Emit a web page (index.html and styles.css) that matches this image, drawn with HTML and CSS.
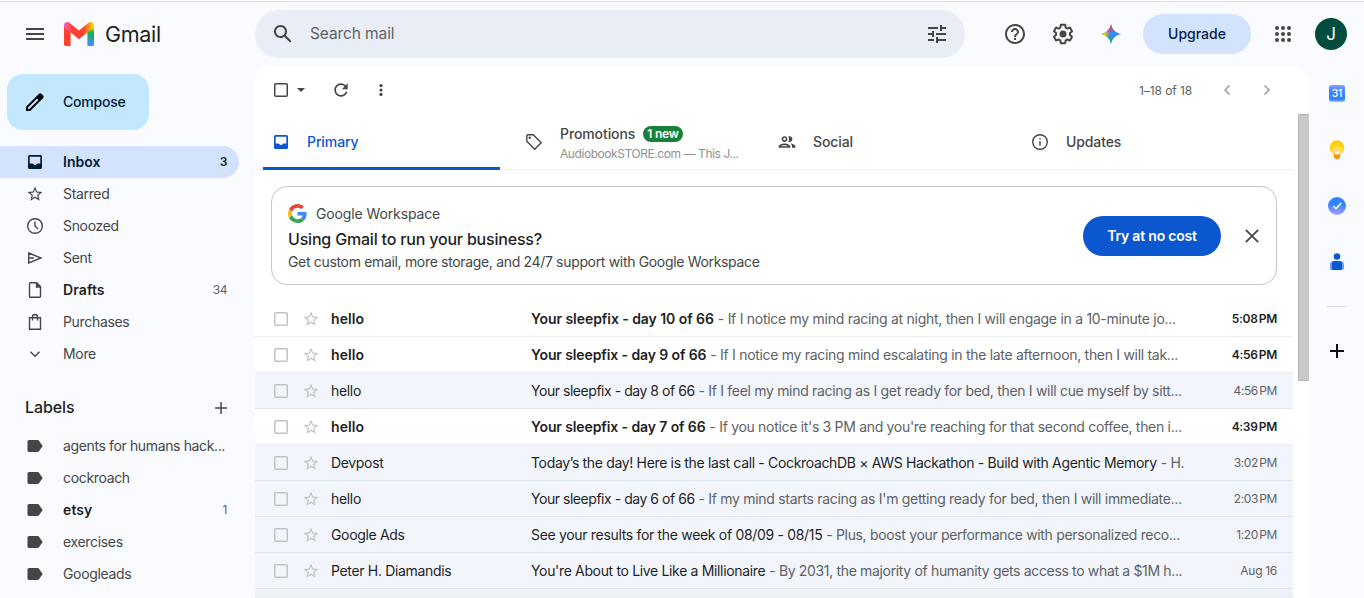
FILE: index.html
```html
<!DOCTYPE html>
<html lang="en">
<head>
<meta charset="utf-8">
<title>Gmail</title>
<link rel="stylesheet" href="styles.css">
</head>
<body>
<svg class="defs" width="0" height="0" aria-hidden="true">
  <defs>
    <linearGradient id="m-leg" x1="0" y1="0" x2="0" y2="1"><stop offset="0.1" stop-color="#f9d000"/><stop offset="0.3" stop-color="#1fae4b"/><stop offset="0.55" stop-color="#1aa87a"/><stop offset="0.8" stop-color="#3d8bff"/></linearGradient>
    <linearGradient id="m-v" gradientUnits="userSpaceOnUse" x1="0" y1="0" x2="30" y2="0"><stop offset="0.04" stop-color="#f763b8"/><stop offset="0.26" stop-color="#ff4131"/><stop offset="0.64" stop-color="#ff4131"/><stop offset="0.82" stop-color="#ff8c1c"/><stop offset="0.96" stop-color="#ffd500"/></linearGradient>
    <linearGradient id="cal" x1="0" y1="0" x2="0" y2="1"><stop offset="0" stop-color="#8b9dff"/><stop offset="0.4" stop-color="#3c82ff"/><stop offset="0.85" stop-color="#3286ff"/><stop offset="1" stop-color="#9cc8ff"/></linearGradient>
    <linearGradient id="task" x1="0" y1="0" x2="0" y2="1"><stop offset="0.4" stop-color="#2f83ff"/><stop offset="1" stop-color="#a9a0ff"/></linearGradient>
    <radialGradient id="bulb" cx="0.5" cy="0.85" r="0.8"><stop offset="0" stop-color="#ffc2c8"/><stop offset="0.3" stop-color="#ffdc5a"/><stop offset="0.6" stop-color="#ffd61a"/><stop offset="1" stop-color="#ffc800"/></radialGradient>
    <radialGradient id="g-red" gradientUnits="userSpaceOnUse" cx="8.500" cy="1" r="8"><stop offset="0.4" stop-color="#f2404f"/><stop offset="1" stop-color="#f2404f" stop-opacity="0"/></radialGradient>
    <radialGradient id="g-yel" gradientUnits="userSpaceOnUse" cx="1" cy="10" r="8"><stop offset="0.4" stop-color="#f5c400"/><stop offset="1" stop-color="#f5c400" stop-opacity="0"/></radialGradient>
    <radialGradient id="g-grn" gradientUnits="userSpaceOnUse" cx="9" cy="20" r="8.500"><stop offset="0.4" stop-color="#0fb657"/><stop offset="1" stop-color="#0fb657" stop-opacity="0"/></radialGradient>
    <symbol id="star" viewBox="0 0 24 24"><path d="M22 9.24l-7.19-.62L12 2 9.19 8.63 2 9.24l5.46 4.73L5.82 21 12 17.27 18.18 21l-1.63-7.03L22 9.24zM12 15.4l-3.76 2.27 1-4.28-3.32-2.88 4.38-.38L12 6.1l1.71 4.04 4.38.38-3.32 2.88 1 4.28L12 15.4z"/></symbol>
    <symbol id="inbox" viewBox="0 0 20 20"><path fill-rule="evenodd" d="M4.5 3h11A1.5 1.5 0 0 1 17 4.500v11a1.500 1.500 0 0 1-1.500 1.500h-11A1.500 1.500 0 0 1 3 15.500v-11A1.500 1.500 0 0 1 4.500 3zM4.700 4.700v6.800h2.800c.4 0 .6.200.8.500.4.700 1 1 1.700 1s1.300-.3 1.700-1c.2-.3.400-.5.800-.5h2.800V4.700z"/></symbol>
    <symbol id="label" viewBox="0 0 20 20"><path d="M4 4h8.600c.6 0 1.100.3 1.400.7L17.700 10 14 15.300c-.3.400-.8.700-1.400.7H4a1.500 1.500 0 0 1-1.500-1.500v-9A1.500 1.500 0 0 1 4 4z"/></symbol>
    <symbol id="box" viewBox="0 0 14 14"><rect x="0.750" y="0.750" width="12.500" height="12.500" rx="1" fill="none" stroke="currentColor" stroke-width="1.500"/></symbol>
    <path id="spark" d="M10 0c.9 5.200 4.800 9.100 10 10-5.200.9-9.100 4.800-10 10-.9-5.200-4.800-9.100-10-10C5.200 9.100 9.100 5.200 10 0z"/>
  </defs>
</svg>

<div class="app">
  <header class="topbar">
    <div class="brand">
      <svg class="menu" viewBox="0 0 18 12"><path d="M0 1h18M0 6h18M0 11h18" stroke="currentColor" stroke-width="2"/></svg>
      <svg class="logo" viewBox="0 0 30 24"><path d="M0 4h6.600v20H1.800A1.800 1.800 0 0 1 0 22z" fill="#ff4131"/><path d="M23.400 4H30v18a1.800 1.800 0 0 1-1.800 2h-4.800z" fill="url(#m-leg)"/><path d="M3.300 3.400L15 12.900 26.700 3.400" fill="none" stroke="url(#m-v)" stroke-width="6.600" stroke-linecap="round"/></svg>
      <span class="brand-name">Gmail</span>
    </div>
    <div class="search">
      <svg class="i24" viewBox="0 0 24 24"><path d="M20.490 19l-5.730-5.730C15.530 12.200 16 10.910 16 9.500 16 5.910 13.090 3 9.500 3S3 5.910 3 9.500 5.910 16 9.500 16c1.410 0 2.700-.47 3.770-1.240L19 20.490 20.490 19zM5 9.500C5 7.010 7.010 5 9.500 5S14 7.010 14 9.500 11.990 14 9.500 14 5 11.990 5 9.500z"/></svg>
      <span class="search-text">Search mail</span>
      <svg class="i24" viewBox="0 0 24 24"><path d="M3 17v2h6v-2H3zM3 5v2h10V5H3zm10 16v-2h8v-2h-8v-2h-2v6h2zM7 9v2H3v2h4v2h2V9H7zm14 4v-2H11v2h10zm-6-4h2V7h4V5h-4V3h-2v6z"/></svg>
    </div>
    <div class="tools">
      <svg class="i24" viewBox="0 0 24 24"><path d="M11 18h2v-2h-2v2zm1-16C6.480 2 2 6.480 2 12s4.480 10 10 10 10-4.480 10-10S17.520 2 12 2zm0 18c-4.410 0-8-3.590-8-8s3.590-8 8-8 8 3.590 8 8-3.590 8-8 8zm0-14c-2.210 0-4 1.790-4 4h2c0-1.100.9-2 2-2s2 .9 2 2c0 2-3 1.750-3 5h2c0-2.250 3-2.500 3-5 0-2.210-1.790-4-4-4z"/></svg>
      <svg class="i24" viewBox="0 0 24 24"><path d="M13.850 22.250h-3.700c-.74 0-1.360-.54-1.450-1.270l-.27-1.890c-.27-.14-.53-.29-.79-.46l-1.800.72c-.7.260-1.470-.03-1.810-.65L2.200 15.530c-.35-.66-.2-1.440.36-1.880l1.530-1.190c-.01-.15-.02-.3-.02-.46 0-.15.010-.31.020-.46l-1.520-1.190c-.59-.45-.74-1.260-.37-1.880l1.850-3.190c.34-.62 1.110-.9 1.790-.63l1.810.73c.26-.17.520-.32.780-.46l.27-1.910c.09-.7.710-1.250 1.440-1.250h3.700c.74 0 1.360.540 1.450 1.270l.27 1.890c.27.140.53.290.79.460l1.800-.72c.71-.26 1.480.030 1.820.650l1.840 3.180c.36.660.2 1.440-.36 1.880l-1.520 1.190c.01.150.02.300.02.460s-.01.310-.02.460l1.520 1.190c.56.450.72 1.230.37 1.860l-1.860 3.220c-.34.620-1.110.900-1.800.630l-1.800-.72c-.26.170-.52.320-.78.460l-.27 1.910c-.1.680-.72 1.220-1.460 1.220zm-3.230-2h2.760l.37-2.550.53-.22c.44-.18.880-.44 1.340-.78l.45-.34 2.380.96 1.380-2.400-2.030-1.580.07-.56c.03-.26.060-.51.060-.78s-.03-.53-.06-.78l-.07-.56 2.030-1.580-1.390-2.400-2.390.96-.45-.35c-.42-.32-.87-.58-1.330-.77l-.52-.22-.37-2.550h-2.760l-.37 2.550-.53.210c-.44.190-.88.440-1.340.790l-.45.330-2.380-.95-1.390 2.390 2.030 1.580-.07.560a7 7 0 0 0-.06.790c0 .26.020.53.060.78l.07.560-2.030 1.580 1.380 2.400 2.390-.96.450.350c.43.330.86.580 1.330.770l.53.220z"/><circle cx="12" cy="12" r="3.500"/></svg>
      <svg class="gem" viewBox="0 0 20 20"><use href="#spark" fill="#3b86f8"/><use href="#spark" fill="url(#g-grn)"/><use href="#spark" fill="url(#g-yel)"/><use href="#spark" fill="url(#g-red)"/></svg>
      <span class="upgrade">Upgrade</span>
      <svg class="grid9" viewBox="0 0 16 16"><g><circle cx="2" cy="2" r="2"/><circle cx="8" cy="2" r="2"/><circle cx="14" cy="2" r="2"/><circle cx="2" cy="8" r="2"/><circle cx="8" cy="8" r="2"/><circle cx="14" cy="8" r="2"/><circle cx="2" cy="14" r="2"/><circle cx="8" cy="14" r="2"/><circle cx="14" cy="14" r="2"/></g></svg>
      <span class="avatar">J</span>
    </div>
  </header>

  <div class="body">
    <nav class="side">
      <div class="compose">
        <svg class="i20" viewBox="0 0 20 20"><path fill-rule="evenodd" d="M1 19v-4.200L13.800 2c.9-.9 2-.9 2.800-.1l1.500 1.500c.8.800.8 1.900-.1 2.800L5.200 19zM3 17.100h1.400l9-9L12 6.600l-9 9z"/></svg>
        <span>Compose</span>
      </div>
      <ul class="nav">
        <li class="on"><svg class="i20"><use href="#inbox"/></svg><span>Inbox</span><b>3</b></li>
        <li><svg class="i18"><use href="#star"/></svg><span>Starred</span></li>
        <li><svg class="i20 ln" viewBox="0 0 20 20"><circle cx="10" cy="10" r="7.300"/><path d="M10 5.500V10l3 3"/></svg><span>Snoozed</span></li>
        <li><svg class="i20 ln" viewBox="0 0 20 20"><path d="M3.700 5L16 10 3.700 15zM3.700 10H9"/></svg><span>Sent</span></li>
        <li class="strong"><svg class="i20 ln" viewBox="0 0 20 20"><path d="M5.500 2.800h6.200l3.800 3.800v9.600a1 1 0 0 1-1 1h-9a1 1 0 0 1-1-1V3.800a1 1 0 0 1 1-1zM11.500 3v4h4"/><path d="M11.500 2.500l4.300 4.300h-4.300z" class="solid"/></svg><span>Drafts</span><em>34</em></li>
        <li><svg class="i20 ln" viewBox="0 0 20 20"><path d="M4.500 5.700h11v11.500h-11zM7.500 8.500V5a2.500 2.500 0 0 1 5 0v3.500"/></svg><span>Purchases</span></li>
        <li><svg class="i20 ln" viewBox="0 0 20 20"><path d="M5.500 7.800L10 12.200l4.500-4.400"/></svg><span>More</span></li>
      </ul>
      <div class="labels-head"><span>Labels</span><svg class="plus" viewBox="0 0 12 12"><path d="M6 0v12M0 6h12" stroke="currentColor" stroke-width="1.500"/></svg></div>
      <ul class="nav">
        <li class="long"><svg class="i20"><use href="#label"/></svg><span>agents for humans hack...</span></li>
        <li><svg class="i20"><use href="#label"/></svg><span>cockroach</span></li>
        <li class="strong"><svg class="i20"><use href="#label"/></svg><span>etsy</span><em>1</em></li>
        <li><svg class="i20"><use href="#label"/></svg><span>exercises</span></li>
        <li><svg class="i20"><use href="#label"/></svg><span>Googleads</span></li>
      </ul>
    </nav>

    <main class="panel">
      <div class="toolbar">
        <svg class="i14 sel"><use href="#box"/></svg>
        <svg class="caret" viewBox="0 0 8 4"><path d="M0 0h8L4 4z"/></svg>
        <svg class="i20 refresh" viewBox="0 0 24 24"><path d="M17.650 6.350C16.200 4.900 14.210 4 12 4c-4.420 0-7.990 3.580-7.990 8s3.570 8 7.990 8c3.730 0 6.840-2.550 7.730-6h-2.080c-.82 2.330-3.040 4-5.650 4-3.310 0-6-2.690-6-6s2.690-6 6-6c1.660 0 3.140.690 4.220 1.780L13 11h7V4l-2.350 2.350z"/></svg>
        <svg class="dots" viewBox="0 0 4 12"><circle cx="2" cy="1.600" r="1.600"/><circle cx="2" cy="6" r="1.600"/><circle cx="2" cy="10.400" r="1.600"/></svg>
        <span class="count">1–18 of 18</span>
        <svg class="i20 prev" viewBox="0 0 20 20"><path d="M12.500 5.500L8 10l4.500 4.500"/></svg>
        <svg class="i20 next" viewBox="0 0 20 20"><path d="M7.500 5.500L12 10l-4.500 4.500"/></svg>
      </div>
      <div class="scroller">
        <div class="content">
          <div class="tabs">
            <div class="tab active"><svg class="i20"><use href="#inbox"/></svg><span>Primary</span></div>
            <div class="tab"><svg class="i20 ln" viewBox="0 0 20 20"><path d="M2.800 3.900a1.200 1.200 0 0 1 1.200-1.200h5.200l8 8-6.500 6.500-7.900-8z"/><circle cx="5.700" cy="5.700" r="1.200" class="solid"/></svg>
              <div class="promo"><div class="promo-top"><span>Promotions</span><span class="new">1 new</span></div><div class="promo-sub">AudiobookSTORE.com — This J...</div></div></div>
            <div class="tab"><svg class="i20" viewBox="0 0 24 24"><path d="M9 13.750c-2.340 0-7 1.170-7 3.500V19h14v-1.750c0-2.330-4.660-3.500-7-3.500zM4.340 17c.84-.58 2.870-1.250 4.660-1.250s3.820.670 4.660 1.250H4.340zM9 12c1.930 0 3.500-1.570 3.500-3.500S10.930 5 9 5 5.500 6.570 5.500 8.500 7.070 12 9 12zm0-5c.83 0 1.500.670 1.500 1.500S9.830 10 9 10s-1.500-.67-1.500-1.500S8.170 7 9 7zm7.040 6.810c1.160.840 1.960 1.960 1.960 3.440V19h4v-1.750c0-2.020-3.500-3.170-5.960-3.440zM15 12c1.930 0 3.500-1.570 3.500-3.500S16.930 5 15 5c-.54 0-1.040.130-1.500.350.63.890 1 1.980 1 3.150s-.37 2.260-1 3.150c.46.220.96.350 1.500.350z"/></svg><span>Social</span></div>
            <div class="tab"><svg class="i20 ln" viewBox="0 0 20 20"><circle cx="10" cy="10" r="7.300"/><path d="M10 9.200v4.600M10 6.200v1.600"/></svg><span>Updates</span></div>
          </div>

          <section class="offer">
            <div class="offer-copy">
              <div class="offer-brand"><svg class="g" viewBox="0 0 48 48"><path fill="#EA4335" d="M24 9.500c3.540 0 6.710 1.220 9.210 3.600l6.850-6.850C35.900 2.380 30.470 0 24 0 14.620 0 6.510 5.380 2.560 13.220l7.980 6.190C12.430 13.720 17.740 9.500 24 9.500z"/><path fill="#4285F4" d="M46.980 24.550c0-1.570-.15-3.090-.38-4.550H24v9.020h12.940c-.58 2.960-2.260 5.480-4.780 7.180l7.730 6c4.510-4.180 7.090-10.360 7.090-17.650z"/><path fill="#FBBC05" d="M10.530 28.590c-.48-1.450-.76-2.990-.76-4.590s.27-3.140.76-4.590l-7.980-6.190C.92 16.460 0 20.120 0 24c0 3.880.920 7.540 2.560 10.780l7.970-6.190z"/><path fill="#34A853" d="M24 48c6.480 0 11.930-2.130 15.890-5.810l-7.730-6c-2.150 1.450-4.920 2.300-8.160 2.300-6.260 0-11.570-4.220-13.470-9.910l-7.980 6.190C6.510 42.620 14.620 48 24 48z"/></svg><span>Google Workspace</span></div>
              <div class="offer-title">Using Gmail to run your business?</div>
              <div class="offer-text">Get custom email, more storage, and 24/7 support with Google Workspace</div>
            </div>
            <span class="try">Try at no cost</span>
            <svg class="close" viewBox="0 0 14 14"><path d="M.8.800l12.400 12.400M13.200.800L.8 13.200" stroke="currentColor" stroke-width="1.800"/></svg>
          </section>

          <div class="list">
            <div class="row unread r1"><svg class="i14"><use href="#box"/></svg><svg class="i18"><use href="#star"/></svg><span class="from">hello</span><span class="msg"><span class="subj">Your sleepfix - day 10 of 66</span> <span class="snip">- If I notice my mind racing at night, then I will engage in a 10-minute jo...</span></span><time>5:08 PM</time></div>
            <div class="row unread r2"><svg class="i14"><use href="#box"/></svg><svg class="i18"><use href="#star"/></svg><span class="from">hello</span><span class="msg"><span class="subj">Your sleepfix - day 9 of 66</span> <span class="snip">- If I notice my racing mind escalating in the late afternoon, then I will tak...</span></span><time>4:56 PM</time></div>
            <div class="row r3"><svg class="i14"><use href="#box"/></svg><svg class="i18"><use href="#star"/></svg><span class="from">hello</span><span class="msg"><span class="subj">Your sleepfix - day 8 of 66</span> <span class="snip">- If I feel my mind racing as I get ready for bed, then I will cue myself by sitt...</span></span><time>4:56 PM</time></div>
            <div class="row unread r4"><svg class="i14"><use href="#box"/></svg><svg class="i18"><use href="#star"/></svg><span class="from">hello</span><span class="msg"><span class="subj">Your sleepfix - day 7 of 66</span> <span class="snip">- If you notice it's 3 PM and you're reaching for that second coffee, then i...</span></span><time>4:39 PM</time></div>
            <div class="row r5"><svg class="i14"><use href="#box"/></svg><svg class="i18"><use href="#star"/></svg><span class="from">Devpost</span><span class="msg"><span class="subj">Today’s the day! Here is the last call - CockroachDB × AWS Hackathon - Build with Agentic Memory</span> <span class="snip">- H.</span></span><time>3:02 PM</time></div>
            <div class="row r6"><svg class="i14"><use href="#box"/></svg><svg class="i18"><use href="#star"/></svg><span class="from">hello</span><span class="msg"><span class="subj">Your sleepfix - day 6 of 66</span> <span class="snip">- If my mind starts racing as I'm getting ready for bed, then I will immediate...</span></span><time>2:03 PM</time></div>
            <div class="row r7"><svg class="i14"><use href="#box"/></svg><svg class="i18"><use href="#star"/></svg><span class="from">Google Ads</span><span class="msg"><span class="subj">See your results for the week of 08/09 - 08/15</span> <span class="snip">- Plus, boost your performance with personalized reco...</span></span><time>1:20 PM</time></div>
            <div class="row r8"><svg class="i14"><use href="#box"/></svg><svg class="i18"><use href="#star"/></svg><span class="from">Peter H. Diamandis</span><span class="msg"><span class="subj">You're About to Live Like a Millionaire</span> <span class="snip">- By 2031, the majority of humanity gets access to what a $1M h...</span></span><time>Aug 16</time></div>
            <div class="row-rest"></div>
          </div>
        </div>
        <div class="scrollbar"></div>
      </div>
    </main>

    <aside class="apps">
      <svg class="app-cal" viewBox="0 0 16 17"><rect width="16" height="17" rx="2.500" fill="url(#cal)"/><text x="8" y="12.300" text-anchor="middle">31</text></svg>
      <svg class="app-keep" viewBox="0 0 16 20"><path d="M4.800 12h6.400v4.600a2.400 2.400 0 0 1-2.400 2.400H7.200a2.400 2.400 0 0 1-2.400-2.400z" fill="#f79400"/><path d="M8 .500a7.200 7.200 0 0 1 3.600 13.400H4.400A7.200 7.200 0 0 1 8 .5z" fill="url(#bulb)"/><rect x="5.500" y="11.500" width="5" height="3" rx="1.500" fill="#fff1f4"/></svg>
      <svg class="app-task" viewBox="0 0 18 18"><circle cx="9" cy="9" r="9" fill="url(#task)"/><path d="M5.200 9l2.800 2.700 5.200-5.700" fill="none" stroke="#fff" stroke-width="1.500"/></svg>
      <svg class="app-con" viewBox="0 0 14 17"><circle cx="7" cy="3.500" r="3.300" fill="#0b57d0"/><path d="M3.500 8h7A3.500 3.500 0 0 1 14 11.500V15a2 2 0 0 1-2 2H1a1 1 0 0 1-1-1v-4.500A3.500 3.500 0 0 1 3.500 8z" fill="#6f9bff"/><path d="M5 8h4a3 3 0 0 1 3 3v4.500a1.500 1.500 0 0 1-1.500 1.500h-7A1.500 1.500 0 0 1 2 15.500V11a3 3 0 0 1 3-3z" fill="#0b57d0"/></svg>
      <hr>
      <svg class="app-add" viewBox="0 0 14 14"><path d="M7 0v14M0 7h14" stroke="#111" stroke-width="2"/></svg>
    </aside>
  </div>
</div>
</body>
</html>
```

FILE: styles.css
```css
* { box-sizing: border-box; }
body { margin: 0; background: #f8fafd; font-family: Inter, "Open Sans", sans-serif; font-size: 14px; line-height: 20px; color: #444746; overflow: hidden; }
ul { list-style: none; margin: 0; padding: 0; }
svg { display: block; flex: none; fill: currentColor; }
.defs { position: absolute; }
.app { height: 598px; display: flex; flex-direction: column; padding-top: 2px; background: linear-gradient(#fff 1px, #dfe3e0 1px, #dfe3e0 2px, #f9fbff 2px); }
.i14 { width: 14px; height: 14px; }
.i18 { width: 18px; height: 18px; }
.i20 { width: 20px; height: 20px; }
.i24 { width: 24px; height: 24px; }
.ln { fill: none; stroke: currentColor; stroke-width: 1.4; }
.ln .solid { fill: currentColor; stroke: none; }

.topbar { height: 64px; flex: none; display: flex; align-items: center; }
.brand { width: 255px; display: flex; align-items: center; padding-left: 26px; }
.menu { width: 18px; height: 12px; fill: none; }
.logo { width: 30px; height: 24px; margin-left: 20px; }
.brand-name { margin-left: 11px; font-size: 21.500px; letter-spacing: -0.300px; color: #1f1f1f; }
.search { width: 710px; height: 48px; border-radius: 24px; background: #e9eef6; display: flex; align-items: center; padding: 0 16px; }
.search-text { flex: 1; margin-left: 15px; font-size: 15.500px; letter-spacing: -0.100px; color: #5f6367; }
.tools { flex: 1; display: flex; align-items: center; padding-left: 38px; }
.tools .i24 { margin-right: 24px; }
.gem { width: 20px; height: 20px; margin-left: 2px; }
.upgrade { width: 108px; height: 40px; border-radius: 20px; margin-left: 22px; background: #d3e3fd; color: #041e49; font-weight: 500; line-height: 40px; text-align: center; }
.grid9 { width: 16px; height: 16px; margin-left: 24px; }
.avatar { width: 32px; height: 32px; margin-left: 24px; border-radius: 50%; background: #004d40; color: #fff; font-size: 17px; line-height: 32px; text-align: center; }

.body { flex: 1; min-height: 0; display: flex; }
.side { width: 255px; flex: none; padding-top: 8px; }
.compose { margin-left: 7px; width: 142px; height: 56px; border-radius: 16px; background: #c2e7ff; display: flex; align-items: center; padding-left: 18px; color: #000; }
.compose span { margin-left: 18px; font-weight: 500; letter-spacing: -0.200px; color: #001d35; }
.side .nav { margin-top: 16px; }
.nav li { height: 32px; width: 239px; display: flex; align-items: center; padding: 0 12px 0 25px; border-radius: 0 16px 16px 0; }
.nav span { flex: 1; margin-left: 18px; white-space: nowrap; letter-spacing: -0.330px; }
.nav .long span { letter-spacing: -0.370px; }
.nav .i18 { margin: 0 1px; }
.nav em, .nav b { font-style: normal; font-size: 12px; letter-spacing: -0.500px; }
.nav em { color: #5e6164; }
.nav .on { background: #d3e3fd; color: #001d35; font-weight: 600; }
.nav .on span { letter-spacing: 0; }
.nav b { font-weight: 600; }
.nav .strong span { font-weight: 600; color: #1f1f1f; letter-spacing: 0.100px; }
.labels-head { width: 239px; height: 28px; margin-top: 24px; padding: 0 12px 0 25px; display: flex; justify-content: space-between; align-items: center; font-size: 16px; font-weight: 500; letter-spacing: -0.100px; color: #1f1f1f; }
.labels-head span { padding-bottom: 2px; }
.plus { width: 12px; height: 12px; color: #444746; }
.side .labels-head + .nav { margin-top: 8px; }

.panel { width: 1054px; flex: none; background: #fff; border-radius: 16px 16px 0 0; display: flex; flex-direction: column; overflow: hidden; }
.toolbar { height: 48px; flex: none; display: flex; align-items: center; padding: 0 32px 0 19px; }
.caret { width: 8px; height: 4px; margin-left: 9px; }
.refresh { margin-left: 26px; }
.dots { width: 4px; height: 12px; margin-left: 28px; }
.count { margin-left: auto; padding-top: 1px; font-size: 12px; letter-spacing: -0.100px; color: #5e6164; }
.prev, .next { fill: none; stroke: #9a9c9e; stroke-width: 1.500; }
.prev { margin-left: 25px; }
.next { margin-left: 20px; }
.scroller { flex: 1; min-height: 0; display: flex; justify-content: space-between; }
.content { width: 1038px; }
.scrollbar { width: 11px; height: 267px; background: #c8c8c8; border: 1px solid #b8b8b8; border-right: 0; }
.tabs { height: 56px; display: flex; border-bottom: 1px solid #eceff1; padding-left: 8px; }
.tab { width: 253px; height: 56px; display: flex; align-items: center; padding-left: 8px; font-weight: 500; letter-spacing: -0.100px; }
.tab > span, .promo { margin-left: 16px; }
.tab.active { width: 237px; margin-right: 16px; border-bottom: 3px solid #0b57d0; border-radius: 2px 2px 0 0; color: #0b57d0; padding-top: 3px; }
.promo { padding-top: 3px; }
.promo-top { display: flex; align-items: center; gap: 8px; height: 20px; }
.new { height: 16px; border-radius: 8px; background: #188038; color: #fff; font-size: 12px; line-height: 16px; padding: 0 4px; font-weight: 600; letter-spacing: -0.200px; }
.promo-sub { font-size: 12px; font-weight: 400; color: #8f9192; line-height: 19px; letter-spacing: -0.430px; white-space: nowrap; }

.offer { margin: 16px 16px 0; height: 99px; border: 1px solid #c4c7c5; border-radius: 16px; display: flex; align-items: center; padding: 0 17px 0 16px; }
.offer-copy { flex: 1; padding-top: 2px; }
.offer-brand { display: flex; align-items: center; gap: 9px; height: 22px; letter-spacing: -0.120px; }
.g { width: 19px; height: 19px; }
.offer-title { font-size: 16px; font-weight: 500; line-height: 28px; letter-spacing: -0.190px; color: #1f1f1f; }
.offer-text { line-height: 18px; letter-spacing: -0.330px; }
.try { width: 138px; height: 40px; border-radius: 20px; background: #0b57d0; color: #fff; font-weight: 600; letter-spacing: -0.200px; line-height: 40px; text-align: center; }
.close { width: 14px; height: 14px; margin-left: 24px; }

.list { margin-top: 16px; }
.row { height: 36px; display: flex; align-items: center; padding: 0 16px 0 19px; background: #f2f6fc; border-bottom: 1px solid #dfe5ec; color: #1f1f1f; white-space: nowrap; }
.row.unread { background: #fff; border-bottom-color: #eceff1; }
.row .i14, .row .i18 { color: #c0c3c4; }
.row .i18 { margin: 1px 0 0 14px; }
.from { width: 200px; margin-left: 11px; letter-spacing: -0.330px; }
.msg { flex: 1; }
.subj { letter-spacing: -0.340px; }
.snip { color: #5e6164; letter-spacing: -0.340px; }
.row time { font-size: 12px; color: #5e6164; letter-spacing: -0.420px; word-spacing: -1.500px; }
.row.r8 time { letter-spacing: -0.300px; word-spacing: 0; }
.unread .from, .unread .subj, .row.unread time { font-weight: 600; color: #1f1f1f; }
.unread .from { letter-spacing: 0.100px; }
.unread .subj { letter-spacing: -0.110px; }
.row.unread time { letter-spacing: -0.300px; }
.r1 .subj { letter-spacing: -0.060px; }
.r1 .snip { letter-spacing: -0.280px; }
.r2 .snip, .r6 .snip { letter-spacing: -0.300px; }
.r4 .snip { letter-spacing: -0.310px; }
.r3 .subj, .r6 .subj { letter-spacing: -0.460px; }
.r3 .snip { letter-spacing: -0.310px; }
.r7 .subj { letter-spacing: -0.320px; }
.row-rest { height: 10px; background: linear-gradient(#f2f6fc, #e9edf2); }

.apps { flex: 1; display: flex; flex-direction: column; align-items: center; padding-top: 19px; }
.app-cal { width: 16px; height: 17px; }
.app-cal text { font-size: 10.500px; font-weight: 500; letter-spacing: -0.300px; fill: #fff; }
.app-keep { width: 16px; height: 20px; margin-top: 38px; }
.app-task { width: 18px; height: 18px; margin-top: 37px; }
.app-con { width: 14px; height: 17px; margin-top: 38px; }
.apps hr { width: 20px; height: 1px; margin: 36px 0 0; border: 0; background: #dcdfe0; }
.app-add { width: 14px; height: 14px; margin-top: 37px; }
```
